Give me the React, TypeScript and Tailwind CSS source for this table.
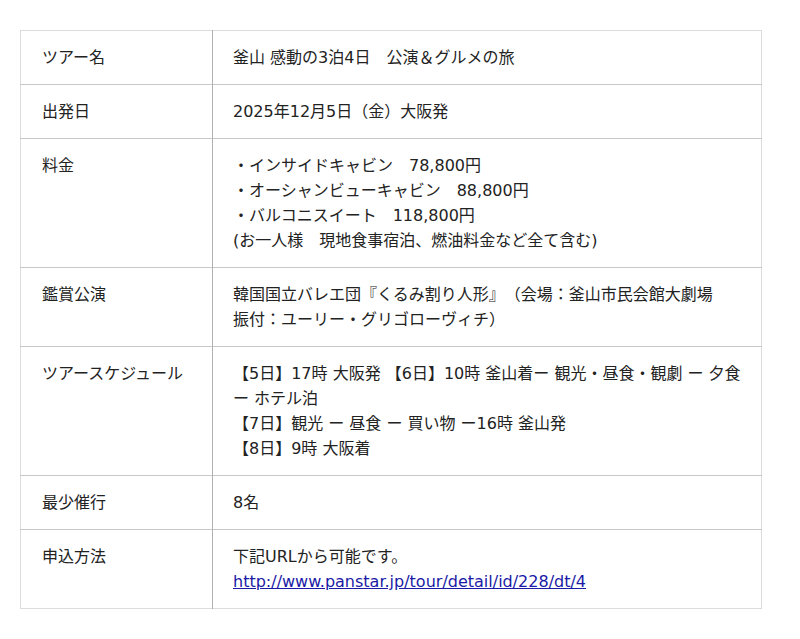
import React from "react";

const rows: { label: string; content: React.ReactNode }[] = [
  { label: "ツアー名", content: <>釜山 感動の3泊4日　公演＆グルメの旅</> },
  { label: "出発日", content: <>2025年12月5日（金）大阪発</> },
  {
    label: "料金",
    content: (
      <>
        ・インサイドキャビン　78,800円
        <br />
        ・オーシャンビューキャビン　88,800円
        <br />
        ・バルコニスイート　118,800円
        <br />
        (お一人様　現地食事宿泊、燃油料金など全て含む)
      </>
    ),
  },
  {
    label: "鑑賞公演",
    content: (
      <>
        韓国国立バレエ団『くるみ割り人形』（会場：釜山市民会館大劇場
        <br />
        振付：ユーリー・グリゴローヴィチ）
      </>
    ),
  },
  {
    label: "ツアースケジュール",
    content: (
      <>
        【5日】17時 大阪発 【6日】10時 釜山着ー 観光・昼食・観劇 ー 夕食
        <br />
        ー ホテル泊
        <br />
        【7日】観光 ー 昼食 ー 買い物 ー16時 釜山発
        <br />
        【8日】9時 大阪着
      </>
    ),
  },
  { label: "最少催行", content: <>8名</> },
  {
    label: "申込方法",
    content: (
      <>
        下記URLから可能です。
        <br />
        <a href="#" className="text-[#1a1aa6] underline">
          http://www.panstar.jp/tour/detail/id/228/dt/4
        </a>
      </>
    ),
  },
];

export default function App() {
  return (
    <div
      className="bg-white min-h-[639px] pt-[30px] pl-[20px] text-[16px] leading-[25px] text-[#222] [text-spacing-trim:space-all]"
      style={{ fontFamily: '"DejaVu Sans", "Noto Sans CJK JP", sans-serif' }}
    >
      <table className="w-[742px] border-collapse border border-[#dcdcdc]">
        <tbody>
          {rows.map((r, i) => (
            <tr key={i} className="border-t border-[#c8c8c8] first:border-t-[#dcdcdc]">
              <td className="w-[192px] align-top pl-[21px] pr-2 pt-[14px] pb-[14px] border-r border-[#b0b0b0] whitespace-nowrap">
                {r.label}
              </td>
              <td className="align-top pl-[20px] pr-2 pt-[14px] pb-[14px] whitespace-nowrap">{r.content}</td>
            </tr>
          ))}
        </tbody>
      </table>
    </div>
  );
}
